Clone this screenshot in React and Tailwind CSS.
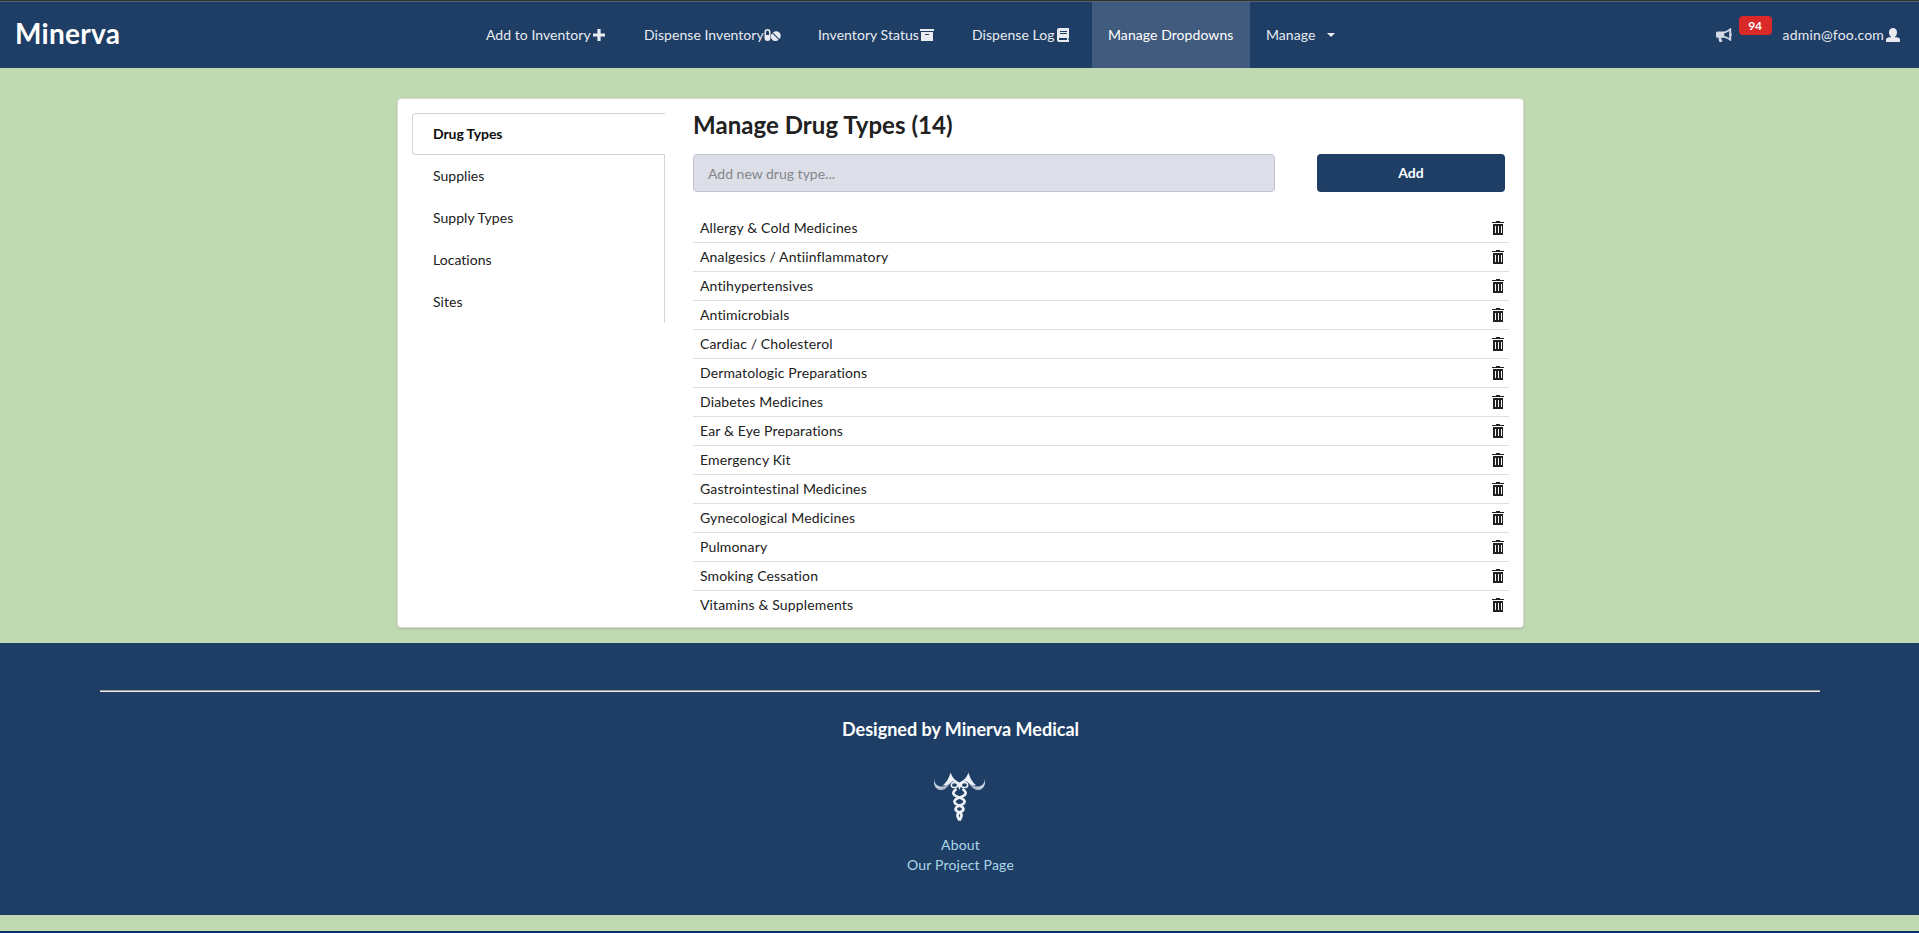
import React from "react";

const DRUG_TYPES = [
  "Allergy & Cold Medicines",
  "Analgesics / Antiinflammatory",
  "Antihypertensives",
  "Antimicrobials",
  "Cardiac / Cholesterol",
  "Dermatologic Preparations",
  "Diabetes Medicines",
  "Ear & Eye Preparations",
  "Emergency Kit",
  "Gastrointestinal Medicines",
  "Gynecological Medicines",
  "Pulmonary",
  "Smoking Cessation",
  "Vitamins & Supplements",
];

const TABS = ["Drug Types", "Supplies", "Supply Types", "Locations", "Sites"];

function PlusIcon() {
  return (
    <svg width="12" height="12" viewBox="0 0 12 12" fill="currentColor">
      <path d="M4.400 0h3.200v4.400H12v3.200H7.600V12H4.400V7.600H0V4.400h4.400z" />
    </svg>
  );
}

function PillsIcon() {
  return (
    <svg width="17" height="12" viewBox="0 0 17 12" fill="currentColor">
      <path fillRule="evenodd" d="M3.500 0A3 3 0 0 1 6.500 3v6a3 3 0 0 1-6 0V3a3 3 0 0 1 3-3zM3.500 1.500A1.500 1.500 0 0 0 2 3v3h3V3a1.500 1.500 0 0 0-1.500-1.500z" />
      <path d="M8.900 3.500a4.500 4.500 0 0 1 6.500 6.500z" />
      <path d="M8.200 4.300a4.500 4.500 0 0 0 6.400 6.400z" />
    </svg>
  );
}

function ArchiveIcon() {
  return (
    <svg width="14" height="12" viewBox="0 0 14 12" fill="currentColor">
      <path d="M0 0h14v2H0z" />
      <path fillRule="evenodd" d="M1 3h12v9H1zM5 5v1h4V5z" />
    </svg>
  );
}

function BookIcon() {
  return (
    <svg width="12" height="14" viewBox="0 0 12 14" fill="currentColor">
      <path fillRule="evenodd" d="M2 0h10v10h-.5v2H12v2H2a2 2 0 0 1-2-2V2a2 2 0 0 1 2-2zM3 3v1h7V3zM3 5v1h7V5zM2 10v2h8v-2z" />
    </svg>
  );
}

function BullhornIcon() {
  return (
    <svg width="16" height="14" viewBox="0 0 16 14" fill="currentColor">
      <path fillRule="evenodd" d="M14 .3c.6-.5 1.200-.3 1.200.5v4.500c1 .4 1 2 0 2.400v4.500c0 .8-.6 1-1.200.5C12 11 10 9.800 7.500 9.700H5.300c-.2 1.200.2 2 1 2.700.3.600-.2 1.600-1 1.600H3.500c-.8-1.200-1-2.600-.8-4.300H1.500A1.500 1.500 0 0 1 0 8.200V5a1.500 1.500 0 0 1 1.500-1.500h6C10 3.400 12 2 14 .3zM13.200 2.900C11.600 4 10 4.900 8.200 5.200v2.800c1.800.3 3.400 1.100 5 2.300z" />
    </svg>
  );
}

function UserIcon() {
  return (
    <svg width="14" height="14" viewBox="0 0 14 14" fill="currentColor">
      <path d="M7 0c2.400 0 4 1.800 4 4.200 0 2-.8 3.700-2 4.500v.5h1.500c2 0 3.500 1 3.500 2.800V13c0 .6-.4 1-1 1H1c-.6 0-1-.4-1-1v-1c0-1.800 1.500-2.800 3.500-2.800H5v-.5C3.800 7.900 3 6.200 3 4.200 3 1.800 4.600 0 7 0z" />
    </svg>
  );
}

function TrashIcon() {
  return (
    <svg width="12" height="14" viewBox="0 0 12 14" fill="#212121" shapeRendering="crispEdges">
      <path d="M4 0h4v1h4v1H0V1h4z" />
      <path fillRule="evenodd" d="M1 3h10v11H1zM3 5v7h1V5zM6 5v7h1V5zM9 5v7h1V5z" />
    </svg>
  );
}

function Caduceus() {
  return (
    <svg width="54" height="52" viewBox="0 0 54 52" fill="none" stroke="#eef2f7">
      <g fill="#eef2f7" stroke="none">
        <path d="M17.500 1.500C19 6 21.500 9 26.500 11.500C31.500 9 34 6 35.500 1.500C37 7 39 11 43.500 14.500C39 14.500 36 13 34 10.500C32 10 29.500 11.500 28.500 14L26.500 19L24.500 14C23.500 11.500 21 10 19 10.500C17 13 14 14.500 9.500 14.500C14 11 16 7 17.500 1.500Z" />
        <path d="M1 7.500C1.500 13 4 16 11 15.500L15 13C12.500 19.500 3 20 1 13z" opacity="0.8" />
        <path d="M52 7.500C51.500 13 49 16 42 15.500L38 13C40.500 19.500 50 20 52 13z" opacity="0.8" />
      </g>
      <path d="M2.500 15.500C5 20 12 20 16 13M50.500 15.500C48 20 41 20 37 13" strokeWidth="1" opacity="0.8" />
      <ellipse cx="21.500" cy="14" rx="3.200" ry="2.600" strokeWidth="1.500" />
      <ellipse cx="31.500" cy="14" rx="3.200" ry="2.600" strokeWidth="1.500" />
      <path d="M23.500 18C17.500 22 21 25 26.500 26.500C33.500 29 33 32.500 26.500 34.500C21 37 21.500 39.500 26.500 41.500C30 43.500 28.500 45.500 26.500 49.500" strokeWidth="2.700" />
      <path d="M29.500 18C35.500 22 32 25 26.500 26.500C19.500 29 20 32.500 26.500 34.500C32 37 31.500 39.500 26.500 41.500C23 43.500 24.500 45.500 26.500 49.500" strokeWidth="2.700" />
    </svg>
  );
}

function NavItem({ label, width, gap = "", children }) {
  return (
    <a className={`flex items-center pl-4 ${width} ${gap} text-[#e8ebf0]`}>
      <span className="tracking-[0.05px]">{label}</span>
      {children}
    </a>
  );
}

export default function App() {
  return (
    <div className="flex h-[933px] w-full flex-col overflow-hidden bg-[#c1d9b1] font-['Lato',sans-serif] text-[14px] leading-[20px] text-[#212121]">
      <div className="h-[2px] shrink-0 border-b border-[#586370] bg-[#303234]" />
      <header className="flex h-[66px] shrink-0 items-stretch bg-[#1e3e66] whitespace-nowrap">
        <div className="flex w-[470px] items-center pb-[4px] pl-[15px] text-[28px] leading-none font-bold tracking-[0.3px] text-white">Minerva</div>
        <nav className="flex">
          <NavItem label="Add to Inventory" width="w-[158px]" gap="gap-[2px]"><PlusIcon /></NavItem>
          <NavItem label="Dispense Inventory" width="w-[174px]"><PillsIcon /></NavItem>
          <NavItem label="Inventory Status" width="w-[154px]" gap="gap-px"><ArchiveIcon /></NavItem>
          <NavItem label="Dispense Log" width="w-[136px]" gap="gap-[3px]"><BookIcon /></NavItem>
          <a className="flex w-[158px] items-center bg-[#415b7e] pl-4 tracking-[0.07px] text-white">Manage Dropdowns</a>
          <NavItem label="Manage" width="w-[100px]" gap="gap-[12px]">
            <svg width="8" height="4" viewBox="0 0 8 4" fill="currentColor"><path d="M0 0h8L4 4z" /></svg>
          </NavItem>
        </nav>
        <div className="ml-auto flex items-center pr-[19px] text-[#e8ebf0]">
          <span className="text-[#d3dae3]"><BullhornIcon /></span>
          <span className="mt-[-19px] ml-[7px] flex h-[19px] w-[33px] items-center justify-center rounded-[4px] bg-[#db2828] text-[12px] leading-none font-bold text-white">94</span>
          <span className="ml-[11px] tracking-[0.18px]">admin@foo.com</span>
          <span className="ml-[2px]"><UserIcon /></span>
        </div>
      </header>

      <main className="flex h-[575px] shrink-0 pt-[30px] pl-[397px]">
        <section className="flex h-[530px] w-[1127px] rounded-[4px] border border-[#d9dcd6] bg-white pt-[14px] pl-[14px] shadow-[0_1px_2px_0_rgba(34,36,38,0.15)]">
          <div className="flex w-[253px] flex-col">
            {TABS.map((tab, i) => (
              <a
                key={tab}
                className={
                  i === 0
                    ? "flex h-[42px] items-center rounded-l-[4px] border border-r-0 border-[#d4d4d5] pl-[20px] font-bold tracking-[-0.08px] text-[#0d0d0d]"
                    : "flex h-[42px] items-center border-r border-[#d4d4d5] pl-[21px] tracking-[0.03px]"
                }
              >
                {tab}
              </a>
            ))}
          </div>
          <div className="ml-[28px] w-[816px]">
            <h2 className="h-[41px] text-[24px] leading-[24px] font-bold tracking-[0.05px]">Manage Drug Types (14)</h2>
            <div className="flex">
              <input
                className="h-[38px] w-[582px] rounded-[4px] border border-[#c0c4cf] bg-[#dcdfe8] px-[14px] placeholder:text-[#85868a]"
                placeholder="Add new drug type..."
              />
              <button className="ml-[42px] h-[38px] w-[188px] rounded-[4px] bg-[#1e3e66] font-bold text-white">Add</button>
            </div>
            <ul className="mt-[22px]">
              {DRUG_TYPES.map((name) => (
                <li key={name} className="flex h-[29px] items-center justify-between border-b border-[#dededf] pr-[5px] pl-[7px] last:border-transparent">
                  <span className="tracking-[0.14px]">{name}</span>
                  <TrashIcon />
                </li>
              ))}
            </ul>
          </div>
        </section>
      </main>

      <footer className="flex h-[272px] shrink-0 flex-col items-center bg-[#1e3e66] pt-[47px]">
        <div className="h-[2px] w-[1720px] border-t border-[#9a9a9a] bg-[#eeeeee]" />
        <h3 className="mt-[25px] pl-[2px] text-[18px] leading-[24px] font-bold text-white">Designed by Minerva Medical</h3>
        <div className="mt-[30px]"><Caduceus /></div>
        <div className="mt-[12px] flex flex-col items-center pl-[2px] tracking-[0.18px] text-[#add8e6]">
          <a>About</a>
          <a>Our Project Page</a>
        </div>
      </footer>
      <div className="h-[16px] shrink-0" />
      <div className="h-[2px] shrink-0 bg-[#0b2f63]" />
    </div>
  );
}
